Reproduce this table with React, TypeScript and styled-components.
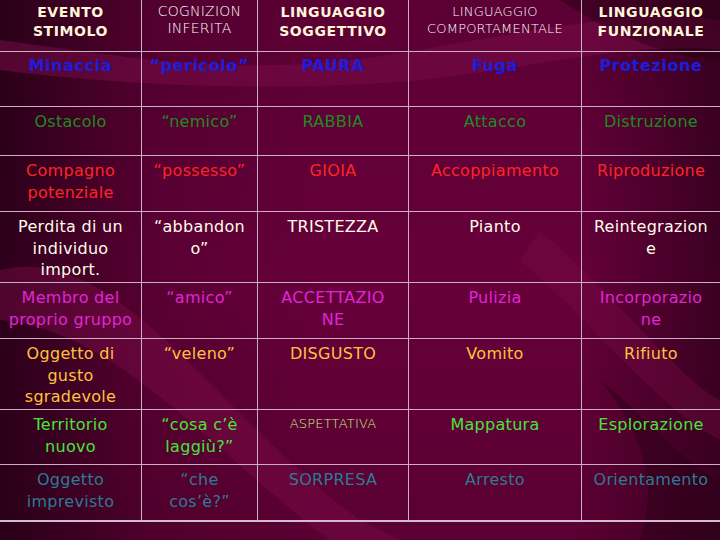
import React from "react";
import styled, { createGlobalStyle } from "styled-components";

const Global = createGlobalStyle`
  html, body { margin: 0; padding: 0; }
  body {
    width: 720px;
    height: 540px;
    overflow: hidden;
    background: #5a0030;
    font-family: "DejaVu Sans", "Liberation Sans", sans-serif;
  }
`;

const Stage = styled.div`
  position: relative;
  width: 720px;
  height: 540px;
  overflow: hidden;
  background:
    linear-gradient(90deg, rgba(25,0,14,0.75) 0%, rgba(25,0,14,0.15) 22%, rgba(0,0,0,0) 45%, rgba(0,0,0,0) 80%, rgba(25,0,14,0.55) 100%),
    linear-gradient(180deg, #5c0034 0%, #66003a 50%, #5a0032 100%);
`;

const Waves = styled.svg`
  position: absolute;
  inset: 0;
  width: 720px;
  height: 540px;
  pointer-events: none;
`;

const Grid = styled.div`
  position: relative;
  display: grid;
  grid-template-columns: 142px 116px 151px 173px 138px;
  grid-template-rows: 52px 55px 49px 56px 71px 56px 71px 55px 57px;
`;

const Cell = styled.div<{ $color: string; $bold?: boolean; $thin?: boolean; $size?: number; $last?: boolean; $bottom?: boolean; $lh?: number }>`
  box-sizing: border-box;
  padding: ${(p) => (p.$bold || p.$thin ? "3px" : "4px")} 2px 0;
  text-align: center;
  color: ${(p) => p.$color};
  font-size: ${(p) => p.$size ?? 16}px;
  line-height: ${(p) => p.$lh ?? 21.5}px;
  font-weight: ${(p) => (p.$bold ? 700 : p.$thin ? 200 : 400)};
  letter-spacing: ${(p) => (p.$thin ? "0.2px" : p.$bold ? "0.6px" : "0.3px")};
  border-right: ${(p) => (p.$last ? "none" : "1px solid #c9b0c4")};
  border-bottom: ${(p) => (p.$bottom ? "2px solid #d4bccc" : "1px solid #c9b0c4")};
  white-space: nowrap;
`;

type C = { t: React.ReactNode; bold?: boolean; thin?: boolean; size?: number; color?: string; lh?: number };

const HEAD = "#fff6d8";

const header: C[] = [
  { t: <>EVENTO<br />STIMOLO</>, bold: true, size: 14, lh: 19 },
  { t: <>COGNIZION<br />INFERITA</>, thin: true, size: 14, lh: 17, color: "#ffffff" },
  { t: <>LINGUAGGIO<br />SOGGETTIVO</>, bold: true, size: 14, lh: 19 },
  { t: <>LINGUAGGIO<br />COMPORTAMENTALE</>, thin: true, size: 13, lh: 17, color: "#ffffff" },
  { t: <>LINGUAGGIO<br />FUNZIONALE</>, bold: true, size: 14, lh: 19 },
];

const rows: { color: string; bold?: boolean; cells: C[] }[] = [
  {
    color: "#1c1cdc",
    bold: true,
    cells: [{ t: "Minaccia" }, { t: "\u201Cpericolo\u201D" }, { t: "PAURA" }, { t: "Fuga" }, { t: "Protezione" }],
  },
  {
    color: "#1f8a22",
    cells: [{ t: "Ostacolo" }, { t: "\u201Cnemico\u201D" }, { t: "RABBIA" }, { t: "Attacco" }, { t: "Distruzione" }],
  },
  {
    color: "#ff2424",
    cells: [
      { t: <>Compagno<br />potenziale</> },
      { t: "\u201Cpossesso\u201D" },
      { t: "GIOIA" },
      { t: "Accoppiamento" },
      { t: "Riproduzione" },
    ],
  },
  {
    color: "#fffbea",
    cells: [
      { t: <>Perdita di un<br />individuo<br />import.</> },
      { t: <>{"\u201Cabbandon"}<br />{"o\u201D"}</> },
      { t: "TRISTEZZA" },
      { t: "Pianto" },
      { t: <>Reintegrazion<br />e</> },
    ],
  },
  {
    color: "#e224d8",
    cells: [
      { t: <>Membro del<br />proprio gruppo</> },
      { t: "\u201Camico\u201D" },
      { t: <>ACCETTAZIO<br />NE</> },
      { t: "Pulizia" },
      { t: <>Incorporazio<br />ne</> },
    ],
  },
  {
    color: "#ffc23e",
    cells: [
      { t: <>Oggetto di<br />gusto<br />sgradevole</> },
      { t: "\u201Cveleno\u201D" },
      { t: "DISGUSTO" },
      { t: "Vomito" },
      { t: "Rifiuto" },
    ],
  },
  {
    color: "#46e43a",
    cells: [
      { t: <>Territorio<br />nuovo</> },
      { t: <>{"\u201Ccosa c\u2019\u00E8"}<br />{"laggi\u00F9?\u201D"}</> },
      { t: "ASPETTATIVA", thin: true, size: 13, color: "#c8f07a" },
      { t: "Mappatura" },
      { t: "Esplorazione" },
    ],
  },
  {
    color: "#2e7a92",
    cells: [
      { t: <>Oggetto<br />imprevisto</> },
      { t: <>{"\u201Cche"}<br />{"cos\u2019\u00E8?\u201D"}</> },
      { t: "SORPRESA" },
      { t: "Arresto" },
      { t: "Orientamento" },
    ],
  },
];

export default function App() {
  return (
    <Stage>
      <Global />
      <Waves viewBox="0 0 720 540">
        <path d="M0 40 C 150 60, 250 80, 420 50 S 650 10, 720 20 L 720 50 C 640 40, 520 70, 420 80 S 150 90, 0 70 Z" fill="#7a0c48" opacity="0.5" />
        <path d="M0 270 C 120 240, 220 420, 360 520 L 400 540 L 330 540 C 220 460, 120 330, 0 320 Z" fill="#7a0c48" opacity="0.45" />
        <path d="M540 230 C 620 300, 680 380, 720 400 L 720 440 C 660 410, 600 330, 520 260 Z" fill="#7a0c48" opacity="0.35" />
        <path d="M560 0 C 620 40, 680 60, 720 60 L 720 0 Z" fill="#2a0016" opacity="0.5" />
        <path d="M600 380 C 650 420, 690 470, 720 480 L 720 540 L 640 540 C 660 480, 640 430, 600 380 Z" fill="#2a0016" opacity="0.45" />
      </Waves>
      <Grid>
        {header.map((c, i) => (
          <Cell key={"h" + i} $color={c.color ?? HEAD} $bold={c.bold} $thin={c.thin} $size={c.size} $lh={c.lh} $last={i === 4}>
            {c.t}
          </Cell>
        ))}
        {rows.map((r, ri) =>
          r.cells.map((c, ci) => (
            <Cell
              key={ri + "-" + ci}
              $color={c.color ?? r.color}
              $bold={r.bold}
              $thin={c.thin}
              $size={c.size}
              $last={ci === 4}
              $bottom={ri === rows.length - 1}
            >
              {c.t}
            </Cell>
          ))
        )}
      </Grid>
    </Stage>
  );
}
